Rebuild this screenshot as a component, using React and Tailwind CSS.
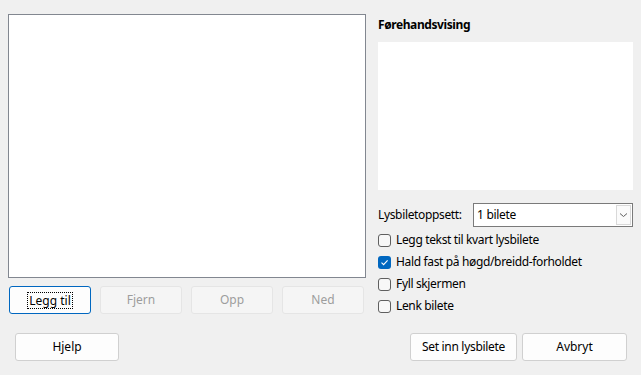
import React from "react";

const font = { fontFamily: '"Noto Sans", "Segoe UI", sans-serif' };

function Btn({ children, className = "", disabled, focused }) {
  return (
    <div
      className={
        "flex items-center justify-center rounded-[3px] border text-[12px] " +
        (focused
          ? "border-[#0067c0] bg-[#fdfdfd] text-black "
          : disabled
          ? "border-[#e5e5e5] bg-[#f5f5f5] text-[#9d9d9d] "
          : "border-[#d0d0d0] bg-[#fdfdfd] text-black ") +
        className
      }
    >
      {focused ? (
        <span className="border border-dotted border-black px-[1px] leading-[15px]">{children}</span>
      ) : (
        children
      )}
    </div>
  );
}

function Check({ checked, label }) {
  return (
    <div className="flex items-center gap-[5px] h-[22px]">
      {checked ? (
        <div className="w-[13px] h-[13px] rounded-[3px] bg-[#0067c0] flex items-center justify-center">
          <svg width="9" height="9" viewBox="0 0 9 9">
            <path d="M1.5 4.6 L3.6 6.6 L7.6 2.4" stroke="white" strokeWidth="1.1" fill="none" />
          </svg>
        </div>
      ) : (
        <div className="w-[13px] h-[13px] rounded-[3px] border border-[#5f5f5f] bg-[#f7f7f7]" />
      )}
      <span className="text-[12px] text-black tracking-[-0.35px]">{label}</span>
    </div>
  );
}

export default function App() {
  return (
    <div className="w-[641px] h-[375px] bg-[#f0f0f0] relative" style={font}>
      <div className="flex pt-[14px]">
        <div className="ml-[8px] w-[358px] flex flex-col">
          <div className="h-[264px] bg-white border border-[#828790]" />
          <div className="flex mt-[8px] ml-[1px] gap-[9px]">
            <Btn focused className="w-[82px] h-[28px]">Legg til</Btn>
            <Btn disabled className="w-[82px] h-[28px]">Fjern</Btn>
            <Btn disabled className="w-[82px] h-[28px]">Opp</Btn>
            <Btn disabled className="w-[82px] h-[28px]">Ned</Btn>
          </div>
        </div>
        <div className="ml-[12px] w-[255px] flex flex-col">
          <div className="h-[22px] flex items-center text-[12px] font-bold tracking-[-0.4px] text-black">
            Førehandsvising
          </div>
          <div className="mt-[6px] h-[148px] bg-white" />
          <div className="mt-[13px] flex items-center h-[24px]">
            <span className="text-[12px] w-[95px] tracking-[-0.35px]">Lysbiletoppsett:</span>
            <div className="flex-1 h-[24px] bg-white border border-[#7a7a7a] flex items-center">
              <span className="text-[12px] pl-[3px] flex-1 tracking-[-0.3px]">1 bilete</span>
              <div className="w-[15px] h-[20px] mr-[1px] border border-[#d9d9d9] flex items-center justify-center bg-[#fbfbfb]">
                <svg width="9" height="6" viewBox="0 0 9 6">
                  <path d="M1 1.5 L4.5 4.5 L8 1.5" stroke="#606060" strokeWidth="1" fill="none" />
                </svg>
              </div>
            </div>
          </div>
          <div className="mt-[2px] flex flex-col">
            <Check label="Legg tekst til kvart lysbilete" />
            <Check checked label="Hald fast på høgd/breidd-forholdet" />
            <Check label="Fyll skjermen" />
            <Check label="Lenk bilete" />
          </div>
        </div>
      </div>
      <div className="flex mt-[16px] px-[15px]">
        <Btn className="w-[104px] h-[28px]">Hjelp</Btn>
        <div className="flex-1" />
        <Btn className="w-[107px] h-[28px] tracking-[-0.3px]">Set inn lysbilete</Btn>
        <Btn className="w-[105px] h-[28px] ml-[5px] mr-[-1px]">Avbryt</Btn>
      </div>
    </div>
  );
}
